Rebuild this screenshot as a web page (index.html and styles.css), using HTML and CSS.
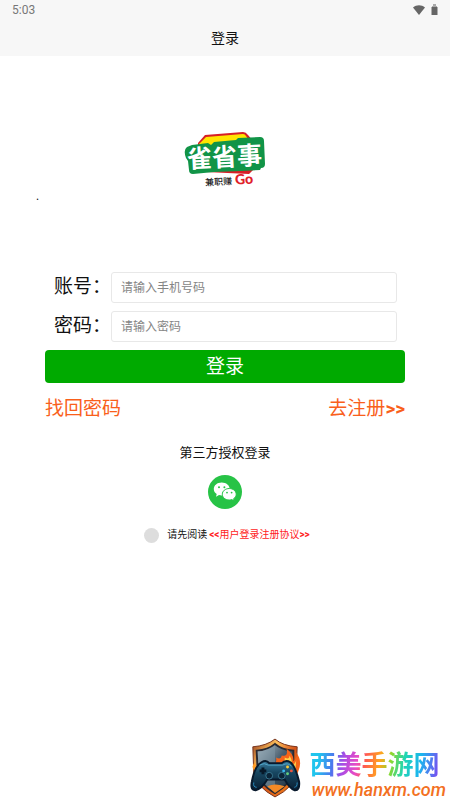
FILE: index.html
```html
<!DOCTYPE html>
<html lang="zh-CN">
<head>
<meta charset="utf-8">
<meta name="viewport" content="width=device-width, initial-scale=1">
<title>登录</title>
<link rel="stylesheet" href="styles.css">
</head>
<body>
<header class="top">
  <div class="status">
    <span>5:03</span>
    <svg class="status-icons" width="28" height="14" viewBox="0 0 28 14" aria-hidden="true">
      <path d="M1 4.6C4.5 1.4 9.500 1.400 13 4.600L7 12z" fill="#666"/>
      <path d="M20 3h1V1h3v2h1v3h-5z" fill="#aaa"/>
      <path d="M19.500 4h6v8h-6z" fill="#666"/>
    </svg>
  </div>
  <h1 class="title">登录</h1>
</header>
<main class="page">
  <div class="brand">
    <span class="dot">.</span>
    <svg class="logo" width="84" height="64" viewBox="0 0 84 64" role="img" aria-label="雀省事 兼职赚Go">
      <path d="M22 7L60 4Q63 4 65 7L71 14V41L66 46L23 44L15 37V15z" fill="#d71f26"/>
      <path d="M23 9L60 6Q62 6 63 8L68 15V24L16 26V16z" fill="#ffe500"/>
      <path d="M4 19L9 17L25 15L28 17L31 14L53 12L55 10L77 9Q81 9 81 13L82 36Q82 40 78 40L77 42L58 43L31 44L10 46Q6 46 6 42L5 33L3 30Q0 22 4 19z" fill="#119447"/>
      <text class="logo-name" x="4" y="38" transform="rotate(-3 42 30)">雀省事</text>
      <text class="logo-tag" x="22" y="57" transform="rotate(-3 36 54)">兼职赚</text>
      <text class="logo-go" x="52" y="56" transform="rotate(-3 60 50)">Go</text>
    </svg>
  </div>
  <form class="form">
    <div class="row"><label for="account">账号：</label><input id="account" type="tel" placeholder="请输入手机号码"></div>
    <div class="row"><label for="password">密码：</label><input id="password" type="password" placeholder="请输入密码"></div>
    <button class="submit" type="button">登录</button>
    <nav class="links"><a href="#">找回密码</a><a href="#">去注册<b>&gt;&gt;</b></a></nav>
    <h2 class="third">第三方授权登录</h2>
    <button class="wechat" type="button" aria-label="微信登录">
      <svg width="34" height="34" viewBox="0 0 34 34" aria-hidden="true">
        <circle cx="17" cy="17" r="17" fill="#27c346"/>
        <path d="M13.700 7.500c-4.500 0-7.900 2.900-7.900 6.500 0 2.100 1.100 3.900 2.900 5.100L8 21.700l3-1.600c.9.200 1.800.3 2.700.3 4.500 0 8-2.800 8-6.400s-3.500-6.500-8-6.500z" fill="#fff"/>
        <path d="M21.300 13.500c-4 0-7 2.600-7 5.700 0 3.200 3 5.800 7 5.800.9 0 1.700-.1 2.500-.4l2.500 1.400-.7-2.300c1.600-1 2.600-2.600 2.600-4.500 0-3.100-3-5.700-6.900-5.700z" fill="#fff" stroke="#27c346"/>
        <g fill="#27c346"><circle cx="11" cy="12.200" r="1"/><circle cx="16.400" cy="12.200" r="1"/><circle cx="19" cy="17.600" r=".9"/><circle cx="23.600" cy="17.600" r=".9"/></g>
      </svg>
    </button>
    <div class="agree">
      <input id="agree" type="checkbox">
      <label for="agree">请先阅读</label>
      <a href="#"><b>&lt;&lt;</b>用户登录注册协议<b>&gt;&gt;</b></a>
    </div>
  </form>
</main>
<aside class="mark">
  <svg width="54" height="60" viewBox="0 0 56 62" aria-hidden="true">
    <defs>
      <linearGradient id="rim" x1="0" y1="0" x2="1" y2="1"><stop offset="0" stop-color="#913719"/><stop offset=".3" stop-color="#ffc05b"/><stop offset=".55" stop-color="#d4551a"/><stop offset="1" stop-color="#ff8a16"/></linearGradient>
      <linearGradient id="steel" x1="0" y1="0" x2="1" y2="1"><stop offset="0" stop-color="#b9c8d1"/><stop offset=".45" stop-color="#4b6070"/><stop offset="1" stop-color="#182b3c"/></linearGradient>
      <linearGradient id="pad" x1="0" y1="0" x2="0" y2="1"><stop offset="0" stop-color="#397b9d"/><stop offset=".4" stop-color="#174660"/><stop offset="1" stop-color="#0a1e32"/></linearGradient>
    </defs>
    <path d="M28 1Q36 8 51 9L50 36Q48 51 28 61Q9 51 6 36L5 9Q19 8 28 1z" fill="url(#rim)" stroke="#76321b"/>
    <path d="M28 6Q35 12 47 13V34Q44 48 28 57Q12 48 10 34L9 13Q21 12 28 6z" fill="url(#steel)" stroke="#292a32" stroke-width="2"/>
    <path d="M28 7V56Q13 48 11 34L10 14Q21 13 28 7z" fill="#8299a8" opacity=".5"/>
    <path d="M20 50Q28 46 38 50L28 57z" fill="#f58a25"/>
    <path d="M24 29Q31 26 29 20Q34 23 35 18Q42 20 40 11Q48 17 47 24Q51 21 50 15Q57 24 52 35L48 42L28 32z" fill="#f5641a"/>
    <path d="M31 28Q39 26 38 20Q43 23 43 18Q47 24 45 29Q49 27 50 23L49 34z" fill="#ffd14b"/>
    <path d="M6 33Q3 29 7 25Q8 31 13 28L11 38z" fill="#ff9b26"/>
    <path d="M14 25Q19 22 22 26H35Q39 22 44 25Q49 29 53 45Q54 55 48 54Q43 52 38 43H20Q14 53 8 54Q2 54 4 45Q7 29 14 25z" fill="url(#pad)" stroke="#08192c" stroke-width="2"/>
    <path d="M12 28Q17 25 21 28H36Q41 25 45 29" fill="none" stroke="#52a4c8"/>
    <path d="M12 34h7M15.500 30.500v7" stroke="#071929" stroke-width="3"/>
    <g fill="#0b2438" stroke="#397992"><circle cx="22" cy="39" r="3.500"/><circle cx="35" cy="39" r="3.500"/></g>
    <circle cx="41" cy="30" r="1.500" fill="#ffcd35"/><circle cx="45" cy="34" r="1.500" fill="#ed553f"/><circle cx="37" cy="34" r="1.500" fill="#39b8f0"/><circle cx="41" cy="37" r="1.500" fill="#62cf80"/>
    <path d="M6 46Q5 51 9 51M51 46Q51 51 48 51" fill="none" stroke="#298abd"/>
  </svg>
  <div class="mark-text"><strong>西美手游网</strong><span>www.hanxm.com</span></div>
</aside>
</body>
</html>
```
FILE: styles.css
```css
* { box-sizing: border-box; }
body {
  margin: 0;
  min-height: 100vh;
  position: relative;
  background: #fff;
  color: #111;
  font-family: Roboto, "Noto Sans CJK SC", sans-serif;
}
a { color: inherit; text-decoration: none; }
.top { height: 56px; background: #f7f7f7; }
.status {
  display: flex;
  justify-content: space-between;
  align-items: center;
  height: 20px;
  padding: 0 10px 0 12px;
  color: #777;
  font-size: 12px;
  font-weight: 400;
}
.title { margin: 0; font-size: 14px; line-height: 36px; font-weight: 400; text-align: center; }
.brand {
  display: grid;
  grid-template-columns: 1fr auto 1fr;
  padding: 72px 36px 0;
  height: 212px;
}
.dot { align-self: start; padding-top: 60px; font-size: 12px; line-height: 16px; }
.form { margin: 0 10%; display: flex; flex-direction: column; }
.row { display: flex; align-items: center; height: 39px; padding: 0 8px 0 9px; }
.row label { flex: none; width: 57px; padding-bottom: 2px; font-size: 19px; line-height: 28px; white-space: nowrap; }
.row input {
  flex: 1;
  min-width: 0;
  height: 31px;
  padding: 0 9px;
  border: 1px solid #e8e8e8;
  border-radius: 3px;
  background: #fff;
  font: inherit;
  font-size: 12px;
}
.row input::placeholder { color: #858585; opacity: 1; }
.submit {
  height: 33px;
  margin-top: 4px;
  padding: 0;
  border: 0;
  border-radius: 4px;
  background: #00aa00;
  color: #fff;
  font: inherit;
  font-size: 19px;
  line-height: 32px;
}
.links {
  display: flex;
  justify-content: space-between;
  margin-top: 12px;
  color: #f9601b;
  font-size: 19px;
  line-height: 28px;
}
.third { margin: 20px 0 0; font-size: 13px; line-height: 20px; font-weight: 400; text-align: center; }
.wechat { align-self: center; width: 34px; height: 34px; margin-top: 12px; padding: 0; border: 0; border-radius: 50%; background: none; }
.wechat svg { display: block; }
.agree {
  display: flex;
  justify-content: center;
  align-items: center;
  margin-top: 18px;
  height: 16px;
  padding-left: 4px;
  font-size: 10px;
  line-height: 16px;
}
.agree input { appearance: none; width: 15px; height: 15px; margin: 0 8px 0 0; border-radius: 50%; background: #ddd; }
.agree label { margin-right: 2px; }
.agree a { color: #f22; }
.logo-name { font: 700 25px "Noto Sans CJK SC", sans-serif; fill: #fff; }
.logo-tag { font: 500 9px "Noto Sans CJK SC", sans-serif; fill: #222; }
.logo-go { font: 900 14px Lato, sans-serif; fill: #df2029; }
.mark {
  position: absolute;
  right: 4px;
  bottom: 0;
  display: flex;
  align-items: center;
  gap: 7px;
}
.mark-text { display: flex; flex-direction: column; padding-top: 14px; }
.mark strong {
  align-self: flex-start;
  font-size: 26px;
  line-height: 30px;
  font-weight: 700;
  color: transparent;
  background: linear-gradient(100deg, #20c5ed 0 8%, #4b78ee 19%, #a94ce5 27%, #e94cc5 37%, #ff5b50 43%, #ffa51e 54%, #8bd92f 62%, #20d6b3 72%, #1bb5ef 84%, #7750f0 98%);
  background-clip: text;
}
.mark span { padding-left: 2px; font: italic 500 18px/20px Roboto, sans-serif; color: #f37022; }
```
